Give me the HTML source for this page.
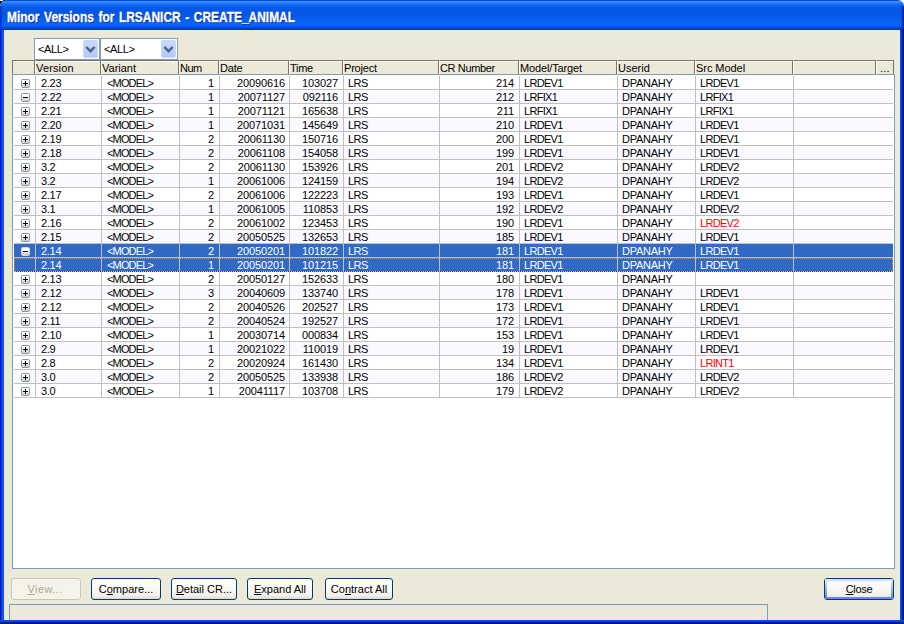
<!DOCTYPE html>
<html><head><meta charset="utf-8"><title>Minor Versions</title><style>
html,body{margin:0;padding:0;}
body{width:904px;height:624px;overflow:hidden;position:relative;background:#ece9d8;font-family:"Liberation Sans",sans-serif;font-size:11px;color:#000;}
div,span{position:absolute;box-sizing:border-box;white-space:nowrap;}
#title{left:0;top:0;width:904px;height:30px;background:linear-gradient(to bottom,#0648d8 0px,#0648d8 1px,#3d8fff 1px,#3a8cff 2px,#1f75f5 3.5px,#0a62ee 6px,#0557e6 9px,#0556e6 15px,#0660f0 20px,#0866f8 24px,#0660f0 26px,#0248d0 28px,#0138b8 29.5px,#0138b8 30px);border-radius:6px 6px 0 0;}
#tl{left:0;top:0;width:5px;height:5px;background:#000;}
#tr{left:898px;top:0;width:6px;height:6px;background:#fff;}
#ttext{left:7px;-webkit-text-stroke:0.3px #fff;top:8px;height:18px;line-height:18px;font-size:14px;word-spacing:1.5px;transform:scaleX(0.8526);font-weight:bold;color:#fff;text-shadow:1px 1px 0 #0a1f8c;transform-origin:0 0;}
#bl{left:0;top:30px;width:4px;height:594px;background:linear-gradient(to right,#0019cf 0px,#0019cf 1px,#0831d9 1px,#0831d9 2px,#1262ec 2px,#1262ec 3px,#0855dd 3px,#0855dd 4px);}
#br{left:900px;top:30px;width:4px;height:594px;background:linear-gradient(to right,#0855dd 0px,#0855dd 1px,#0441d8 1px,#0441d8 2px,#001da0 2px,#001da0 3px,#00138c 3px,#00138c 4px);}
#bb{left:0;top:620px;width:904px;height:4px;background:linear-gradient(to bottom,#0855dd 0px,#0855dd 1px,#0441d8 1px,#0441d8 2px,#001da0 2px,#001da0 3px,#00138c 3px,#00138c 4px);}
.combo{background:#fff;border:1px solid #7f9db9;height:22px;top:38px;}
.combo .t{left:3px;top:3px;line-height:14px;letter-spacing:-0.4px;}
.cbtn{top:1px;width:15px;height:18px;border-radius:2px;background:linear-gradient(to bottom,#cad8fc,#bccefa 60%,#b4c8f8);border:1px solid #c8d6fb;}
#grid{left:12px;top:74px;width:883px;height:495px;background:#fff;border:1px solid #7f9db9;}
.hc{top:60px;height:14px;background:#ece9d8;border-top:1px solid #7b7367;border-left:1px solid #fff;border-right:1px solid #7b7367;box-shadow:inset 0 1px 0 #fbfaf5;}
.hc span{left:1px;top:0px;line-height:14px;}
.rowbg{left:14px;width:879px;height:13px;}
.hl{left:14px;width:879px;height:1px;background:#c0c0c0;}
.vl{top:76px;width:1px;background:#c0c0c0;}
.c{line-height:14px;height:14px;}
.r{text-align:right;}
.pm{left:21px;width:9px;height:9px;border:1px solid #7898b5;border-radius:1.5px;background:linear-gradient(to bottom,#fff 0%,#fbfaf8 35%,#d4c8b6 100%);}
.pm i{position:absolute;left:1px;top:3px;width:5px;height:1px;background:#000;}
.pm b{position:absolute;left:3px;top:1px;width:1px;height:5px;background:#000;}
.btn{top:578px;height:22px;border:1px solid #003c74;border-radius:3px;background:linear-gradient(to bottom,#fff 0%,#f8f7f3 55%,#f0efe8 85%,#dcd7cb 100%);text-align:center;line-height:20px;}
.btn.dis{border-color:#c9c7ba;background:#f5f4ea;color:#aca899;}
.btn.def::before{content:'';position:absolute;left:0;top:0;right:0;bottom:0;border:2px solid;border-image:linear-gradient(to bottom,#cee7ff,#9dbbeb 50%,#6982ee) 1;border-radius:2px;}
u{text-decoration:underline;}
#status{left:9px;top:604px;width:759px;height:16px;border:1px solid #7a9cc0;border-bottom:none;}
</style></head><body>
<div id="tl"></div><div id="tr"></div>
<div style="left:0;top:0;width:3px;height:1px;background:#fff"></div><div style="left:0;top:4px;width:1px;height:1px;background:#fff"></div>
<div id="title"></div>
<div style="left:0;top:6px;width:3px;height:24px;background:linear-gradient(to right,#0030c8,rgba(0,48,200,0))"></div>
<div style="left:901px;top:6px;width:3px;height:24px;background:linear-gradient(to right,rgba(0,20,140,0),#00148c)"></div>
<div id="ttext">Minor Versions for LRSANICR - CREATE_ANIMAL</div>
<div id="bl"></div><div id="br"></div><div id="bb"></div>
<div class="combo" style="left:34px;width:66px"><span class="t">&lt;ALL&gt;</span><div class="cbtn" style="left:48px"><svg width="14" height="16" viewBox="0 0 14 16" style="position:absolute;left:0;top:0"><path d="M2.3 6 L6.5 10.2 L10.7 6" fill="none" stroke="#4d6185" stroke-width="2.4"/></svg></div></div>
<div class="combo" style="left:100px;width:78px"><span class="t">&lt;ALL&gt;</span><div class="cbtn" style="left:60px"><svg width="14" height="16" viewBox="0 0 14 16" style="position:absolute;left:0;top:0"><path d="M2.3 6 L6.5 10.2 L10.7 6" fill="none" stroke="#4d6185" stroke-width="2.4"/></svg></div></div>
<div class="hc" style="left:12px;width:23px;border-left:1px solid #7b7367"></div>
<div class="hc" style="left:35px;width:66px"><span style="left:0px;letter-spacing:0.15px">Version</span></div>
<div class="hc" style="left:101px;width:78px"><span style="left:0px;letter-spacing:0px">Variant</span></div>
<div class="hc" style="left:179px;width:40px"><span style="left:0px;letter-spacing:-0.5px">Num</span></div>
<div class="hc" style="left:219px;width:70px"><span style="left:0px;letter-spacing:-0.2px">Date</span></div>
<div class="hc" style="left:289px;width:54px"><span style="left:0px;letter-spacing:-0.3px">Time</span></div>
<div class="hc" style="left:343px;width:96px"><span style="left:0px;letter-spacing:-0.2px">Project</span></div>
<div class="hc" style="left:439px;width:80px"><span style="left:0px;letter-spacing:-0.37px">CR Number</span></div>
<div class="hc" style="left:519px;width:98px"><span style="left:0px;letter-spacing:-0.14px">Model/Target</span></div>
<div class="hc" style="left:617px;width:78px"><span style="left:0px;letter-spacing:0px">Userid</span></div>
<div class="hc" style="left:695px;width:98px"><span style="left:0px;letter-spacing:-0.05px">Src Model</span></div>
<div class="hc" style="left:793px;width:83px"><span style="left:0px;letter-spacing:0px"></span></div>
<div class="hc" style="left:876px;width:18px"><span style="left:3px;letter-spacing:0.2px">...</span></div>
<div id="grid"></div>
<div class="hl" style="top:89px"></div>
<div class="rowbg" style="top:90px;background:#f9f9ff"></div>
<div class="hl" style="top:103px"></div>
<div class="hl" style="top:117px"></div>
<div class="rowbg" style="top:118px;background:#f9f9ff"></div>
<div class="hl" style="top:131px"></div>
<div class="hl" style="top:145px"></div>
<div class="rowbg" style="top:146px;background:#f9f9ff"></div>
<div class="hl" style="top:159px"></div>
<div class="hl" style="top:173px"></div>
<div class="rowbg" style="top:174px;background:#f9f9ff"></div>
<div class="hl" style="top:187px"></div>
<div class="hl" style="top:201px"></div>
<div class="rowbg" style="top:202px;background:#f9f9ff"></div>
<div class="hl" style="top:215px"></div>
<div class="hl" style="top:229px"></div>
<div class="rowbg" style="top:230px;background:#f9f9ff"></div>
<div class="hl" style="top:243px"></div>
<div class="rowbg" style="top:244px;background:#316ac5"></div>
<div class="hl" style="top:257px"></div>
<div class="rowbg" style="top:258px;background:#316ac5"></div>
<div class="hl" style="top:271px"></div>
<div class="hl" style="top:285px"></div>
<div class="rowbg" style="top:286px;background:#f9f9ff"></div>
<div class="hl" style="top:299px"></div>
<div class="hl" style="top:313px"></div>
<div class="rowbg" style="top:314px;background:#f9f9ff"></div>
<div class="hl" style="top:327px"></div>
<div class="hl" style="top:341px"></div>
<div class="rowbg" style="top:342px;background:#f9f9ff"></div>
<div class="hl" style="top:355px"></div>
<div class="hl" style="top:369px"></div>
<div class="rowbg" style="top:370px;background:#f9f9ff"></div>
<div class="hl" style="top:383px"></div>
<div class="hl" style="top:397px"></div>
<div style="left:14px;top:258px;width:879px;height:14px;border:1px dotted #ce953a;border-bottom-color:#3f3f3f"></div>
<div class="vl" style="left:35px;height:322px"></div>
<div class="vl" style="left:101px;height:322px"></div>
<div class="vl" style="left:179px;height:322px"></div>
<div class="vl" style="left:219px;height:322px"></div>
<div class="vl" style="left:289px;height:322px"></div>
<div class="vl" style="left:343px;height:322px"></div>
<div class="vl" style="left:439px;height:322px"></div>
<div class="vl" style="left:519px;height:322px"></div>
<div class="vl" style="left:617px;height:322px"></div>
<div class="vl" style="left:695px;height:322px"></div>
<div class="vl" style="left:793px;height:322px"></div>
<div class="pm" style="top:79px"><i></i><b></b></div>
<span class="c" style="left:41px;top:76px;color:#000;letter-spacing:-0.3px">2.23</span>
<span class="c" style="left:107px;top:76px;color:#000;letter-spacing:-0.85px">&lt;MODEL&gt;</span>
<span class="c r" style="right:690px;top:76px;color:#000;letter-spacing:-0.12px">1</span>
<span class="c r" style="right:619px;top:76px;color:#000;letter-spacing:-0.12px">20090616</span>
<span class="c r" style="right:566px;top:76px;color:#000;letter-spacing:-0.12px">103027</span>
<span class="c" style="left:348px;top:76px;color:#000;letter-spacing:-0.5px">LRS</span>
<span class="c r" style="right:390px;top:76px;color:#000;letter-spacing:-0.12px">214</span>
<span class="c" style="left:524px;top:76px;color:#000;letter-spacing:-0.7px">LRDEV1</span>
<span class="c" style="left:622px;top:76px;color:#000;letter-spacing:-0.25px">DPANAHY</span>
<span class="c" style="left:700px;top:76px;color:#000;letter-spacing:-0.7px">LRDEV1</span>
<div class="pm" style="top:93px"><i></i></div>
<span class="c" style="left:41px;top:90px;color:#000;letter-spacing:-0.3px">2.22</span>
<span class="c" style="left:107px;top:90px;color:#000;letter-spacing:-0.85px">&lt;MODEL&gt;</span>
<span class="c r" style="right:690px;top:90px;color:#000;letter-spacing:-0.12px">1</span>
<span class="c r" style="right:619px;top:90px;color:#000;letter-spacing:-0.12px">20071127</span>
<span class="c r" style="right:566px;top:90px;color:#000;letter-spacing:-0.12px">092116</span>
<span class="c" style="left:348px;top:90px;color:#000;letter-spacing:-0.5px">LRS</span>
<span class="c r" style="right:390px;top:90px;color:#000;letter-spacing:-0.12px">212</span>
<span class="c" style="left:524px;top:90px;color:#000;letter-spacing:-0.7px">LRFIX1</span>
<span class="c" style="left:622px;top:90px;color:#000;letter-spacing:-0.25px">DPANAHY</span>
<span class="c" style="left:700px;top:90px;color:#000;letter-spacing:-0.7px">LRFIX1</span>
<div class="pm" style="top:107px"><i></i><b></b></div>
<span class="c" style="left:41px;top:104px;color:#000;letter-spacing:-0.3px">2.21</span>
<span class="c" style="left:107px;top:104px;color:#000;letter-spacing:-0.85px">&lt;MODEL&gt;</span>
<span class="c r" style="right:690px;top:104px;color:#000;letter-spacing:-0.12px">1</span>
<span class="c r" style="right:619px;top:104px;color:#000;letter-spacing:-0.12px">20071121</span>
<span class="c r" style="right:566px;top:104px;color:#000;letter-spacing:-0.12px">165638</span>
<span class="c" style="left:348px;top:104px;color:#000;letter-spacing:-0.5px">LRS</span>
<span class="c r" style="right:390px;top:104px;color:#000;letter-spacing:-0.12px">211</span>
<span class="c" style="left:524px;top:104px;color:#000;letter-spacing:-0.7px">LRFIX1</span>
<span class="c" style="left:622px;top:104px;color:#000;letter-spacing:-0.25px">DPANAHY</span>
<span class="c" style="left:700px;top:104px;color:#000;letter-spacing:-0.7px">LRFIX1</span>
<div class="pm" style="top:121px"><i></i><b></b></div>
<span class="c" style="left:41px;top:118px;color:#000;letter-spacing:-0.3px">2.20</span>
<span class="c" style="left:107px;top:118px;color:#000;letter-spacing:-0.85px">&lt;MODEL&gt;</span>
<span class="c r" style="right:690px;top:118px;color:#000;letter-spacing:-0.12px">1</span>
<span class="c r" style="right:619px;top:118px;color:#000;letter-spacing:-0.12px">20071031</span>
<span class="c r" style="right:566px;top:118px;color:#000;letter-spacing:-0.12px">145649</span>
<span class="c" style="left:348px;top:118px;color:#000;letter-spacing:-0.5px">LRS</span>
<span class="c r" style="right:390px;top:118px;color:#000;letter-spacing:-0.12px">210</span>
<span class="c" style="left:524px;top:118px;color:#000;letter-spacing:-0.7px">LRDEV1</span>
<span class="c" style="left:622px;top:118px;color:#000;letter-spacing:-0.25px">DPANAHY</span>
<span class="c" style="left:700px;top:118px;color:#000;letter-spacing:-0.7px">LRDEV1</span>
<div class="pm" style="top:135px"><i></i><b></b></div>
<span class="c" style="left:41px;top:132px;color:#000;letter-spacing:-0.3px">2.19</span>
<span class="c" style="left:107px;top:132px;color:#000;letter-spacing:-0.85px">&lt;MODEL&gt;</span>
<span class="c r" style="right:690px;top:132px;color:#000;letter-spacing:-0.12px">2</span>
<span class="c r" style="right:619px;top:132px;color:#000;letter-spacing:-0.12px">20061130</span>
<span class="c r" style="right:566px;top:132px;color:#000;letter-spacing:-0.12px">150716</span>
<span class="c" style="left:348px;top:132px;color:#000;letter-spacing:-0.5px">LRS</span>
<span class="c r" style="right:390px;top:132px;color:#000;letter-spacing:-0.12px">200</span>
<span class="c" style="left:524px;top:132px;color:#000;letter-spacing:-0.7px">LRDEV1</span>
<span class="c" style="left:622px;top:132px;color:#000;letter-spacing:-0.25px">DPANAHY</span>
<span class="c" style="left:700px;top:132px;color:#000;letter-spacing:-0.7px">LRDEV1</span>
<div class="pm" style="top:149px"><i></i><b></b></div>
<span class="c" style="left:41px;top:146px;color:#000;letter-spacing:-0.3px">2.18</span>
<span class="c" style="left:107px;top:146px;color:#000;letter-spacing:-0.85px">&lt;MODEL&gt;</span>
<span class="c r" style="right:690px;top:146px;color:#000;letter-spacing:-0.12px">2</span>
<span class="c r" style="right:619px;top:146px;color:#000;letter-spacing:-0.12px">20061108</span>
<span class="c r" style="right:566px;top:146px;color:#000;letter-spacing:-0.12px">154058</span>
<span class="c" style="left:348px;top:146px;color:#000;letter-spacing:-0.5px">LRS</span>
<span class="c r" style="right:390px;top:146px;color:#000;letter-spacing:-0.12px">199</span>
<span class="c" style="left:524px;top:146px;color:#000;letter-spacing:-0.7px">LRDEV1</span>
<span class="c" style="left:622px;top:146px;color:#000;letter-spacing:-0.25px">DPANAHY</span>
<span class="c" style="left:700px;top:146px;color:#000;letter-spacing:-0.7px">LRDEV1</span>
<div class="pm" style="top:163px"><i></i><b></b></div>
<span class="c" style="left:41px;top:160px;color:#000;letter-spacing:-0.3px">3.2</span>
<span class="c" style="left:107px;top:160px;color:#000;letter-spacing:-0.85px">&lt;MODEL&gt;</span>
<span class="c r" style="right:690px;top:160px;color:#000;letter-spacing:-0.12px">2</span>
<span class="c r" style="right:619px;top:160px;color:#000;letter-spacing:-0.12px">20061130</span>
<span class="c r" style="right:566px;top:160px;color:#000;letter-spacing:-0.12px">153926</span>
<span class="c" style="left:348px;top:160px;color:#000;letter-spacing:-0.5px">LRS</span>
<span class="c r" style="right:390px;top:160px;color:#000;letter-spacing:-0.12px">201</span>
<span class="c" style="left:524px;top:160px;color:#000;letter-spacing:-0.7px">LRDEV2</span>
<span class="c" style="left:622px;top:160px;color:#000;letter-spacing:-0.25px">DPANAHY</span>
<span class="c" style="left:700px;top:160px;color:#000;letter-spacing:-0.7px">LRDEV2</span>
<div class="pm" style="top:177px"><i></i><b></b></div>
<span class="c" style="left:41px;top:174px;color:#000;letter-spacing:-0.3px">3.2</span>
<span class="c" style="left:107px;top:174px;color:#000;letter-spacing:-0.85px">&lt;MODEL&gt;</span>
<span class="c r" style="right:690px;top:174px;color:#000;letter-spacing:-0.12px">1</span>
<span class="c r" style="right:619px;top:174px;color:#000;letter-spacing:-0.12px">20061006</span>
<span class="c r" style="right:566px;top:174px;color:#000;letter-spacing:-0.12px">124159</span>
<span class="c" style="left:348px;top:174px;color:#000;letter-spacing:-0.5px">LRS</span>
<span class="c r" style="right:390px;top:174px;color:#000;letter-spacing:-0.12px">194</span>
<span class="c" style="left:524px;top:174px;color:#000;letter-spacing:-0.7px">LRDEV2</span>
<span class="c" style="left:622px;top:174px;color:#000;letter-spacing:-0.25px">DPANAHY</span>
<span class="c" style="left:700px;top:174px;color:#000;letter-spacing:-0.7px">LRDEV2</span>
<div class="pm" style="top:191px"><i></i><b></b></div>
<span class="c" style="left:41px;top:188px;color:#000;letter-spacing:-0.3px">2.17</span>
<span class="c" style="left:107px;top:188px;color:#000;letter-spacing:-0.85px">&lt;MODEL&gt;</span>
<span class="c r" style="right:690px;top:188px;color:#000;letter-spacing:-0.12px">2</span>
<span class="c r" style="right:619px;top:188px;color:#000;letter-spacing:-0.12px">20061006</span>
<span class="c r" style="right:566px;top:188px;color:#000;letter-spacing:-0.12px">122223</span>
<span class="c" style="left:348px;top:188px;color:#000;letter-spacing:-0.5px">LRS</span>
<span class="c r" style="right:390px;top:188px;color:#000;letter-spacing:-0.12px">193</span>
<span class="c" style="left:524px;top:188px;color:#000;letter-spacing:-0.7px">LRDEV1</span>
<span class="c" style="left:622px;top:188px;color:#000;letter-spacing:-0.25px">DPANAHY</span>
<span class="c" style="left:700px;top:188px;color:#000;letter-spacing:-0.7px">LRDEV1</span>
<div class="pm" style="top:205px"><i></i><b></b></div>
<span class="c" style="left:41px;top:202px;color:#000;letter-spacing:-0.3px">3.1</span>
<span class="c" style="left:107px;top:202px;color:#000;letter-spacing:-0.85px">&lt;MODEL&gt;</span>
<span class="c r" style="right:690px;top:202px;color:#000;letter-spacing:-0.12px">1</span>
<span class="c r" style="right:619px;top:202px;color:#000;letter-spacing:-0.12px">20061005</span>
<span class="c r" style="right:566px;top:202px;color:#000;letter-spacing:-0.12px">110853</span>
<span class="c" style="left:348px;top:202px;color:#000;letter-spacing:-0.5px">LRS</span>
<span class="c r" style="right:390px;top:202px;color:#000;letter-spacing:-0.12px">192</span>
<span class="c" style="left:524px;top:202px;color:#000;letter-spacing:-0.7px">LRDEV2</span>
<span class="c" style="left:622px;top:202px;color:#000;letter-spacing:-0.25px">DPANAHY</span>
<span class="c" style="left:700px;top:202px;color:#000;letter-spacing:-0.7px">LRDEV2</span>
<div class="pm" style="top:219px"><i></i><b></b></div>
<span class="c" style="left:41px;top:216px;color:#000;letter-spacing:-0.3px">2.16</span>
<span class="c" style="left:107px;top:216px;color:#000;letter-spacing:-0.85px">&lt;MODEL&gt;</span>
<span class="c r" style="right:690px;top:216px;color:#000;letter-spacing:-0.12px">2</span>
<span class="c r" style="right:619px;top:216px;color:#000;letter-spacing:-0.12px">20061002</span>
<span class="c r" style="right:566px;top:216px;color:#000;letter-spacing:-0.12px">123453</span>
<span class="c" style="left:348px;top:216px;color:#000;letter-spacing:-0.5px">LRS</span>
<span class="c r" style="right:390px;top:216px;color:#000;letter-spacing:-0.12px">190</span>
<span class="c" style="left:524px;top:216px;color:#000;letter-spacing:-0.7px">LRDEV1</span>
<span class="c" style="left:622px;top:216px;color:#000;letter-spacing:-0.25px">DPANAHY</span>
<span class="c" style="left:700px;top:216px;color:#f00;letter-spacing:-0.7px">LRDEV2</span>
<div class="pm" style="top:233px"><i></i><b></b></div>
<span class="c" style="left:41px;top:230px;color:#000;letter-spacing:-0.3px">2.15</span>
<span class="c" style="left:107px;top:230px;color:#000;letter-spacing:-0.85px">&lt;MODEL&gt;</span>
<span class="c r" style="right:690px;top:230px;color:#000;letter-spacing:-0.12px">2</span>
<span class="c r" style="right:619px;top:230px;color:#000;letter-spacing:-0.12px">20050525</span>
<span class="c r" style="right:566px;top:230px;color:#000;letter-spacing:-0.12px">132653</span>
<span class="c" style="left:348px;top:230px;color:#000;letter-spacing:-0.5px">LRS</span>
<span class="c r" style="right:390px;top:230px;color:#000;letter-spacing:-0.12px">185</span>
<span class="c" style="left:524px;top:230px;color:#000;letter-spacing:-0.7px">LRDEV1</span>
<span class="c" style="left:622px;top:230px;color:#000;letter-spacing:-0.25px">DPANAHY</span>
<span class="c" style="left:700px;top:230px;color:#000;letter-spacing:-0.7px">LRDEV1</span>
<div class="pm" style="top:247px;border-color:#d6d9dc"><i></i></div>
<span class="c" style="left:41px;top:244px;color:#fff;letter-spacing:-0.3px">2.14</span>
<span class="c" style="left:107px;top:244px;color:#fff;letter-spacing:-0.85px">&lt;MODEL&gt;</span>
<span class="c r" style="right:690px;top:244px;color:#fff;letter-spacing:-0.12px">2</span>
<span class="c r" style="right:619px;top:244px;color:#fff;letter-spacing:-0.12px">20050201</span>
<span class="c r" style="right:566px;top:244px;color:#fff;letter-spacing:-0.12px">101822</span>
<span class="c" style="left:348px;top:244px;color:#fff;letter-spacing:-0.5px">LRS</span>
<span class="c r" style="right:390px;top:244px;color:#fff;letter-spacing:-0.12px">181</span>
<span class="c" style="left:524px;top:244px;color:#fff;letter-spacing:-0.7px">LRDEV1</span>
<span class="c" style="left:622px;top:244px;color:#fff;letter-spacing:-0.25px">DPANAHY</span>
<span class="c" style="left:700px;top:244px;color:#fff;letter-spacing:-0.7px">LRDEV1</span>
<span class="c" style="left:41px;top:258px;color:#fff;letter-spacing:-0.3px">2.14</span>
<span class="c" style="left:107px;top:258px;color:#fff;letter-spacing:-0.85px">&lt;MODEL&gt;</span>
<span class="c r" style="right:690px;top:258px;color:#fff;letter-spacing:-0.12px">1</span>
<span class="c r" style="right:619px;top:258px;color:#fff;letter-spacing:-0.12px">20050201</span>
<span class="c r" style="right:566px;top:258px;color:#fff;letter-spacing:-0.12px">101215</span>
<span class="c" style="left:348px;top:258px;color:#fff;letter-spacing:-0.5px">LRS</span>
<span class="c r" style="right:390px;top:258px;color:#fff;letter-spacing:-0.12px">181</span>
<span class="c" style="left:524px;top:258px;color:#fff;letter-spacing:-0.7px">LRDEV1</span>
<span class="c" style="left:622px;top:258px;color:#fff;letter-spacing:-0.25px">DPANAHY</span>
<span class="c" style="left:700px;top:258px;color:#fff;letter-spacing:-0.7px">LRDEV1</span>
<div class="pm" style="top:275px"><i></i><b></b></div>
<span class="c" style="left:41px;top:272px;color:#000;letter-spacing:-0.3px">2.13</span>
<span class="c" style="left:107px;top:272px;color:#000;letter-spacing:-0.85px">&lt;MODEL&gt;</span>
<span class="c r" style="right:690px;top:272px;color:#000;letter-spacing:-0.12px">2</span>
<span class="c r" style="right:619px;top:272px;color:#000;letter-spacing:-0.12px">20050127</span>
<span class="c r" style="right:566px;top:272px;color:#000;letter-spacing:-0.12px">152633</span>
<span class="c" style="left:348px;top:272px;color:#000;letter-spacing:-0.5px">LRS</span>
<span class="c r" style="right:390px;top:272px;color:#000;letter-spacing:-0.12px">180</span>
<span class="c" style="left:524px;top:272px;color:#000;letter-spacing:-0.7px">LRDEV1</span>
<span class="c" style="left:622px;top:272px;color:#000;letter-spacing:-0.25px">DPANAHY</span>
<div class="pm" style="top:289px"><i></i><b></b></div>
<span class="c" style="left:41px;top:286px;color:#000;letter-spacing:-0.3px">2.12</span>
<span class="c" style="left:107px;top:286px;color:#000;letter-spacing:-0.85px">&lt;MODEL&gt;</span>
<span class="c r" style="right:690px;top:286px;color:#000;letter-spacing:-0.12px">3</span>
<span class="c r" style="right:619px;top:286px;color:#000;letter-spacing:-0.12px">20040609</span>
<span class="c r" style="right:566px;top:286px;color:#000;letter-spacing:-0.12px">133740</span>
<span class="c" style="left:348px;top:286px;color:#000;letter-spacing:-0.5px">LRS</span>
<span class="c r" style="right:390px;top:286px;color:#000;letter-spacing:-0.12px">178</span>
<span class="c" style="left:524px;top:286px;color:#000;letter-spacing:-0.7px">LRDEV1</span>
<span class="c" style="left:622px;top:286px;color:#000;letter-spacing:-0.25px">DPANAHY</span>
<span class="c" style="left:700px;top:286px;color:#000;letter-spacing:-0.7px">LRDEV1</span>
<div class="pm" style="top:303px"><i></i><b></b></div>
<span class="c" style="left:41px;top:300px;color:#000;letter-spacing:-0.3px">2.12</span>
<span class="c" style="left:107px;top:300px;color:#000;letter-spacing:-0.85px">&lt;MODEL&gt;</span>
<span class="c r" style="right:690px;top:300px;color:#000;letter-spacing:-0.12px">2</span>
<span class="c r" style="right:619px;top:300px;color:#000;letter-spacing:-0.12px">20040526</span>
<span class="c r" style="right:566px;top:300px;color:#000;letter-spacing:-0.12px">202527</span>
<span class="c" style="left:348px;top:300px;color:#000;letter-spacing:-0.5px">LRS</span>
<span class="c r" style="right:390px;top:300px;color:#000;letter-spacing:-0.12px">173</span>
<span class="c" style="left:524px;top:300px;color:#000;letter-spacing:-0.7px">LRDEV1</span>
<span class="c" style="left:622px;top:300px;color:#000;letter-spacing:-0.25px">DPANAHY</span>
<span class="c" style="left:700px;top:300px;color:#000;letter-spacing:-0.7px">LRDEV1</span>
<div class="pm" style="top:317px"><i></i><b></b></div>
<span class="c" style="left:41px;top:314px;color:#000;letter-spacing:-0.3px">2.11</span>
<span class="c" style="left:107px;top:314px;color:#000;letter-spacing:-0.85px">&lt;MODEL&gt;</span>
<span class="c r" style="right:690px;top:314px;color:#000;letter-spacing:-0.12px">2</span>
<span class="c r" style="right:619px;top:314px;color:#000;letter-spacing:-0.12px">20040524</span>
<span class="c r" style="right:566px;top:314px;color:#000;letter-spacing:-0.12px">192527</span>
<span class="c" style="left:348px;top:314px;color:#000;letter-spacing:-0.5px">LRS</span>
<span class="c r" style="right:390px;top:314px;color:#000;letter-spacing:-0.12px">172</span>
<span class="c" style="left:524px;top:314px;color:#000;letter-spacing:-0.7px">LRDEV1</span>
<span class="c" style="left:622px;top:314px;color:#000;letter-spacing:-0.25px">DPANAHY</span>
<span class="c" style="left:700px;top:314px;color:#000;letter-spacing:-0.7px">LRDEV1</span>
<div class="pm" style="top:331px"><i></i><b></b></div>
<span class="c" style="left:41px;top:328px;color:#000;letter-spacing:-0.3px">2.10</span>
<span class="c" style="left:107px;top:328px;color:#000;letter-spacing:-0.85px">&lt;MODEL&gt;</span>
<span class="c r" style="right:690px;top:328px;color:#000;letter-spacing:-0.12px">1</span>
<span class="c r" style="right:619px;top:328px;color:#000;letter-spacing:-0.12px">20030714</span>
<span class="c r" style="right:566px;top:328px;color:#000;letter-spacing:-0.12px">000834</span>
<span class="c" style="left:348px;top:328px;color:#000;letter-spacing:-0.5px">LRS</span>
<span class="c r" style="right:390px;top:328px;color:#000;letter-spacing:-0.12px">153</span>
<span class="c" style="left:524px;top:328px;color:#000;letter-spacing:-0.7px">LRDEV1</span>
<span class="c" style="left:622px;top:328px;color:#000;letter-spacing:-0.25px">DPANAHY</span>
<span class="c" style="left:700px;top:328px;color:#000;letter-spacing:-0.7px">LRDEV1</span>
<div class="pm" style="top:345px"><i></i><b></b></div>
<span class="c" style="left:41px;top:342px;color:#000;letter-spacing:-0.3px">2.9</span>
<span class="c" style="left:107px;top:342px;color:#000;letter-spacing:-0.85px">&lt;MODEL&gt;</span>
<span class="c r" style="right:690px;top:342px;color:#000;letter-spacing:-0.12px">1</span>
<span class="c r" style="right:619px;top:342px;color:#000;letter-spacing:-0.12px">20021022</span>
<span class="c r" style="right:566px;top:342px;color:#000;letter-spacing:-0.12px">110019</span>
<span class="c" style="left:348px;top:342px;color:#000;letter-spacing:-0.5px">LRS</span>
<span class="c r" style="right:390px;top:342px;color:#000;letter-spacing:-0.12px">19</span>
<span class="c" style="left:524px;top:342px;color:#000;letter-spacing:-0.7px">LRDEV1</span>
<span class="c" style="left:622px;top:342px;color:#000;letter-spacing:-0.25px">DPANAHY</span>
<span class="c" style="left:700px;top:342px;color:#000;letter-spacing:-0.7px">LRDEV1</span>
<div class="pm" style="top:359px"><i></i><b></b></div>
<span class="c" style="left:41px;top:356px;color:#000;letter-spacing:-0.3px">2.8</span>
<span class="c" style="left:107px;top:356px;color:#000;letter-spacing:-0.85px">&lt;MODEL&gt;</span>
<span class="c r" style="right:690px;top:356px;color:#000;letter-spacing:-0.12px">2</span>
<span class="c r" style="right:619px;top:356px;color:#000;letter-spacing:-0.12px">20020924</span>
<span class="c r" style="right:566px;top:356px;color:#000;letter-spacing:-0.12px">161430</span>
<span class="c" style="left:348px;top:356px;color:#000;letter-spacing:-0.5px">LRS</span>
<span class="c r" style="right:390px;top:356px;color:#000;letter-spacing:-0.12px">134</span>
<span class="c" style="left:524px;top:356px;color:#000;letter-spacing:-0.7px">LRDEV1</span>
<span class="c" style="left:622px;top:356px;color:#000;letter-spacing:-0.25px">DPANAHY</span>
<span class="c" style="left:700px;top:356px;color:#f00;letter-spacing:-0.7px">LRINT1</span>
<div class="pm" style="top:373px"><i></i><b></b></div>
<span class="c" style="left:41px;top:370px;color:#000;letter-spacing:-0.3px">3.0</span>
<span class="c" style="left:107px;top:370px;color:#000;letter-spacing:-0.85px">&lt;MODEL&gt;</span>
<span class="c r" style="right:690px;top:370px;color:#000;letter-spacing:-0.12px">2</span>
<span class="c r" style="right:619px;top:370px;color:#000;letter-spacing:-0.12px">20050525</span>
<span class="c r" style="right:566px;top:370px;color:#000;letter-spacing:-0.12px">133938</span>
<span class="c" style="left:348px;top:370px;color:#000;letter-spacing:-0.5px">LRS</span>
<span class="c r" style="right:390px;top:370px;color:#000;letter-spacing:-0.12px">186</span>
<span class="c" style="left:524px;top:370px;color:#000;letter-spacing:-0.7px">LRDEV2</span>
<span class="c" style="left:622px;top:370px;color:#000;letter-spacing:-0.25px">DPANAHY</span>
<span class="c" style="left:700px;top:370px;color:#000;letter-spacing:-0.7px">LRDEV2</span>
<div class="pm" style="top:387px"><i></i><b></b></div>
<span class="c" style="left:41px;top:384px;color:#000;letter-spacing:-0.3px">3.0</span>
<span class="c" style="left:107px;top:384px;color:#000;letter-spacing:-0.85px">&lt;MODEL&gt;</span>
<span class="c r" style="right:690px;top:384px;color:#000;letter-spacing:-0.12px">1</span>
<span class="c r" style="right:619px;top:384px;color:#000;letter-spacing:-0.12px">20041117</span>
<span class="c r" style="right:566px;top:384px;color:#000;letter-spacing:-0.12px">103708</span>
<span class="c" style="left:348px;top:384px;color:#000;letter-spacing:-0.5px">LRS</span>
<span class="c r" style="right:390px;top:384px;color:#000;letter-spacing:-0.12px">179</span>
<span class="c" style="left:524px;top:384px;color:#000;letter-spacing:-0.7px">LRDEV2</span>
<span class="c" style="left:622px;top:384px;color:#000;letter-spacing:-0.25px">DPANAHY</span>
<span class="c" style="left:700px;top:384px;color:#000;letter-spacing:-0.7px">LRDEV2</span>
<div class="btn dis" style="left:11px;width:70px"><span style="position:static;letter-spacing:0.4px;margin-left:-2px"><u>V</u>iew...</span></div>
<div class="btn " style="left:91px;width:70px">C<u>o</u>mpare...</div>
<div class="btn " style="left:171px;width:66px"><u>D</u>etail CR...</div>
<div class="btn " style="left:247px;width:66px"><u>E</u>xpand All</div>
<div class="btn " style="left:325px;width:68px">Co<u>n</u>tract All</div>
<div class="btn def" style="left:824px;width:70px"><span style="position:static;letter-spacing:-0.3px"><u>C</u>lose</span></div>
<div id="status"></div>
</body></html>
